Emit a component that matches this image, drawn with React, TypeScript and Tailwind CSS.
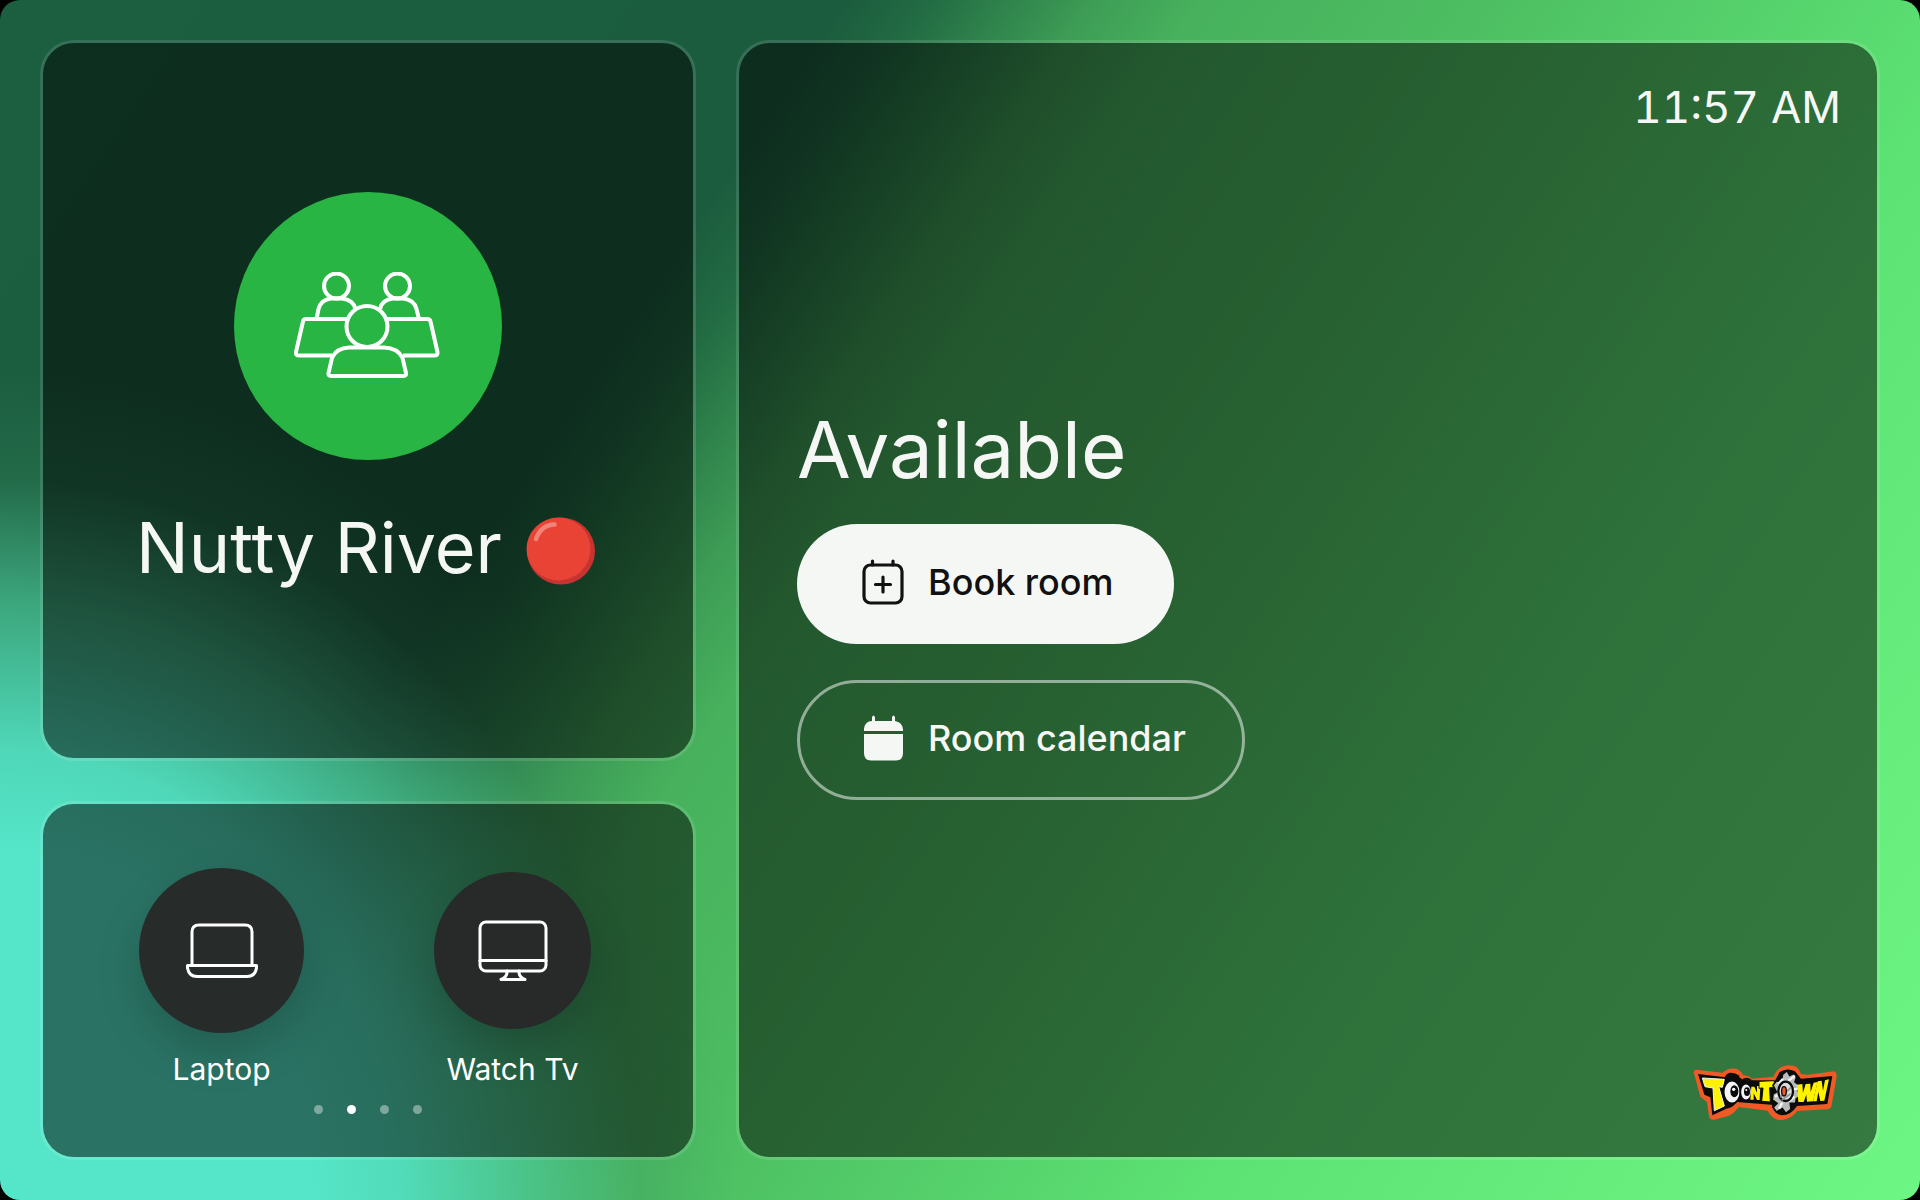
import React from "react";

const panel =
  "rounded-[34px] border-3 border-white/12 bg-black/50 bg-clip-padding";

function MeetingIcon() {
  return (
    <svg viewBox="0 0 148 108" className="w-[148px]" fill="none" stroke="white" strokeWidth="4" strokeLinejoin="round" aria-hidden="true">
      <circle cx="42.500" cy="14" r="12.500" />
      <circle cx="103.500" cy="14" r="12.500" />
      <path d="M22.500 47 L24.500 37 Q27 27.500 37 26.500 H48 Q59 27.500 61.500 37" />
      <path d="M125 47 L122.500 37 Q120 27.500 109 26.500 H99 Q88 27.500 86 37" />
      <path d="M53 47 H12 Q9.500 47 9 49.500 L2 80 Q1.500 83.500 5 83.500 H38" />
      <path d="M93 47 H133 Q136 47 136.500 49.500 L143.500 80 Q144 83.500 140.500 83.500 H109" />
      <circle cx="73" cy="54.500" r="20.500" />
      <path d="M34.500 101 L38 86 Q42.500 76 55 75.500 H90 Q104 76 108.500 86 L112 101 Q112.500 104 109.500 104 H37 Q34 104 34.500 101Z" />
    </svg>
  );
}

function LaptopIcon() {
  return (
    <svg viewBox="0 0 72 55" className="w-[72px]" fill="none" stroke="white" strokeWidth="3" strokeLinejoin="round" aria-hidden="true">
      <path d="M6 42.500 V9 Q6 2 13 2 H59 Q66 2 66 9 V42.500" />
      <path d="M1.500 42.500 H70.500 V45 Q69 53.500 61 53.500 H11 Q3 53.500 1.500 45Z" />
    </svg>
  );
}

function TvIcon() {
  return (
    <svg viewBox="0 0 70 61" className="w-[70px]" fill="none" stroke="white" strokeWidth="3" strokeLinejoin="round" strokeLinecap="round" aria-hidden="true">
      <rect x="2" y="2" width="66" height="49" rx="6" />
      <path d="M2 40.500 H68" />
      <path d="M29 51 Q29.500 57 23 59.500 H47 Q40.500 57 41 51" />
    </svg>
  );
}

function BookIcon() {
  return (
    <svg viewBox="0 0 42 46" className="w-[42px]" fill="none" stroke="#111" strokeWidth="3.200" strokeLinecap="round" aria-hidden="true">
      <rect x="2" y="6" width="38" height="38" rx="6.500" />
      <path d="M10.500 2 V6 M31 2 V6 M21 18 V33 M13.500 25.500 H28.500" />
    </svg>
  );
}

function CalendarIcon() {
  return (
    <svg viewBox="0 0 42 46" className="w-[42px]" fill="#f5f7f5" aria-hidden="true">
      <path d="M2 16 V14 Q3 6 10 6 V2 Q11.500 -1 13 2 V6 H30 V2 Q31.500 -1 33 2 V6 Q40 7 41 14 V16Z" />
      <path d="M2 19 H41 V38 Q41 45.500 34 45.500 H9 Q2 45.500 2 38Z" />
    </svg>
  );
}

function RedCircle() {
  return (
    <svg viewBox="0 0 70 68" className="mt-[5px] w-[70px]" role="img" aria-label="Red circle">
      <ellipse cx="35" cy="34" rx="34" ry="33.500" fill="#c63330" />
      <ellipse cx="32.500" cy="32" rx="32" ry="31.500" fill="#e94335" />
      <path d="M10 22 Q15 8 28.500 7.500" fill="none" stroke="#f28376" strokeWidth="4.500" strokeLinecap="round" />
    </svg>
  );
}

function ToontownLogo() {
  return (
    <svg viewBox="40 42 432 170" className="mr-1 w-36" role="img" aria-label="Toontown">
      <path d="M42 66 Q44 58 56 60 L128 68 Q146 52 170 56 Q186 62 190 76 Q206 76 216 86 L282 80 Q288 62 304 52 Q326 40 350 50 Q360 60 364 72 L384 74 L464 64 Q472 68 471 80 L456 164 Q454 177 442 178 L352 183 Q338 206 304 211 Q276 208 264 182 L196 173 L176 172 Q164 190 148 197 L104 209 Q90 211 88 198 L82 156 L62 140 Z" fill="#f15a24" />
      <path d="M55 72 L138 82 Q152 68 172 76 L190 90 L286 92 L300 66 Q322 52 346 64 L364 86 L458 78 L443 162 L352 168 Q334 196 306 196 Q284 192 276 164 L198 158 L172 156 Q158 174 140 176 L98 196 L92 142 L74 134 Z" fill="#0b0b0b" />
      <path d="M68 84 L134 88 L128 112 L117 110 L134 168 L104 182 L100 114 L76 110 Z" fill="#fff200" stroke="#f5f5f5" strokeWidth="3" />
      <path d="M138 82 Q150 62 178 80 M186 94 Q198 80 214 92" fill="none" stroke="#0b0b0b" strokeWidth="6" />
      <ellipse cx="157" cy="126" rx="25" ry="34" fill="#f5f5f5" stroke="#0b0b0b" strokeWidth="5" />
      <ellipse cx="164" cy="124" rx="12" ry="18" fill="#0b0b0b" />
      <circle cx="162" cy="118" r="5" fill="#fff" />
      <ellipse cx="199" cy="126" rx="17" ry="25" fill="#f5f5f5" stroke="#0b0b0b" strokeWidth="5" />
      <ellipse cx="202" cy="125" rx="9" ry="13" fill="#0b0b0b" />
      <circle cx="200" cy="120" r="3" fill="#fff" />
      <path d="M215 110 H224 L232 128 V108 H242 L240 150 H232 L222 130 V149 H212 Z" fill="#fff200" />
      <path d="M238 94 L284 92 L284 113 L270 113 L272 156 L246 154 L250 114 L238 115 Z" fill="#fff200" stroke="#0b0b0b" strokeWidth="3" />
      <path d="M308 74 L322 62 L330 76 L344 70 L350 84 L346 96 L360 106 L352 118 L364 138 L350 146 L348 160 L332 160 L334 178 L318 190 L308 176 L290 186 L280 172 L292 160 L278 150 L280 132 L290 126 L280 106 L290 92 L306 96 Z" fill="#b9bcbc" stroke="#0b0b0b" strokeWidth="5" />
      <path d="M296 102 L310 86 M286 140 L306 128 M298 176 L308 158 M326 92 L346 78 M336 120 L356 116 M328 154 L344 140" stroke="#f5f5f5" strokeWidth="7" />
      <ellipse cx="318" cy="124" rx="22" ry="29" fill="#d9dcdc" stroke="#0b0b0b" strokeWidth="7" />
      <path d="M302 142 L334 112 M306 150 L332 132" stroke="#8e9292" strokeWidth="5" />
      <ellipse cx="313" cy="124" rx="7" ry="14" fill="#f15a24" stroke="#0b0b0b" strokeWidth="4" />
      <path d="M352 104 L368 102 L370 128 L378 102 L392 101 L393 126 L402 98 L414 96 L400 154 L382 155 L380 134 L372 156 L356 156 Z" fill="#fff200" />
      <path d="M414 94 L426 92 L430 122 L436 91 L448 88 L434 152 L422 153 L416 126 L411 154 L400 154 Z" fill="#fff200" />
    </svg>
  );
}

function Shortcut({ label, children }: { label: string; children: React.ReactNode }) {
  return (
    <button className="flex flex-col items-center gap-4 text-[30px] leading-10 text-white">
      <span className="flex h-[166px] items-center justify-center">{children}</span>
      {label}
    </button>
  );
}

export default function App() {
  return (
    <div className="min-h-screen bg-black font-['Inter',sans-serif]">
      <main className="grid min-h-screen grid-cols-[656fr_1144fr] gap-10 rounded-[20px] bg-[radial-gradient(ellipse_800px_900px_at_0px_1200px,#55e6c9_0%,#55e6c9_38%,#52dfc0f0_50%,#4cc99ab0_66%,#3a946840_80%,#1b5c4000_92%),linear-gradient(124deg,#1b5e40_0%,#1b5c3e_31%,#226b43_34%,#3d9c55_40%,#47b15d_44%,#4cbc61_53%,#5de374_74%,#6ef684_100%)] p-10">
        <div className="grid grid-rows-[720fr_358fr] gap-10">
          <section className={`${panel} flex flex-col items-center pt-[149px]`}>
            <div className="flex size-[268px] items-center justify-center rounded-full bg-[#29b544]">
              <MeetingIcon />
            </div>
            <h1 className="mt-10 flex items-center gap-6 pr-1 text-[70px] leading-24 text-[#f5f7f5]">
              Nutty River
              <RedCircle />
            </h1>
          </section>
          <section className={`${panel} flex flex-col items-center pt-[63px]`}>
            <div className="flex w-full justify-between pr-[102px] pl-24">
              <Shortcut label="Laptop">
                <span className="flex size-[165px] items-center justify-center rounded-full bg-[#272c2a] shadow-[0_20px_44px_rgba(0,0,0,0.18)]">
                  <LaptopIcon />
                </span>
              </Shortcut>
              <Shortcut label="Watch Tv">
                <span className="flex size-[157px] items-center justify-center rounded-full bg-[#272a28] shadow-[0_20px_44px_rgba(0,0,0,0.18)]">
                  <TvIcon />
                </span>
              </Shortcut>
            </div>
            <nav aria-label="Pages" className="mt-4 flex gap-6">
              <button aria-label="Page 1" className="size-[9px] rounded-full bg-white/40" />
              <button aria-label="Page 2" aria-current="page" className="size-[9px] rounded-full bg-white" />
              <button aria-label="Page 3" className="size-[9px] rounded-full bg-white/40" />
              <button aria-label="Page 4" className="size-[9px] rounded-full bg-white/40" />
            </nav>
          </section>
        </div>
        <section className={`${panel} flex flex-col justify-between pt-[38px] pr-9 pb-9 pl-[58px] text-[#f5f7f5]`}>
          <time className="self-end text-[44px] leading-13 tabular-nums">11:57 AM</time>
          <div className="flex flex-col items-start pt-1">
            <h2 className="text-[78px] leading-24">Available</h2>
            <button className="mt-[26px] flex h-[120px] items-center gap-6 rounded-full bg-[#f5f7f5] pr-15 pb-1 pl-[65px] text-[36px] font-medium text-[#111]">
              <BookIcon />
              Book room
            </button>
            <button className="mt-9 flex h-[120px] items-center gap-6 rounded-full border-3 border-white/50 pr-14 pb-1 pl-[62px] text-[36px] font-medium">
              <CalendarIcon />
              Room calendar
            </button>
          </div>
          <div className="self-end">
            <ToontownLogo />
          </div>
        </section>
      </main>
    </div>
  );
}
